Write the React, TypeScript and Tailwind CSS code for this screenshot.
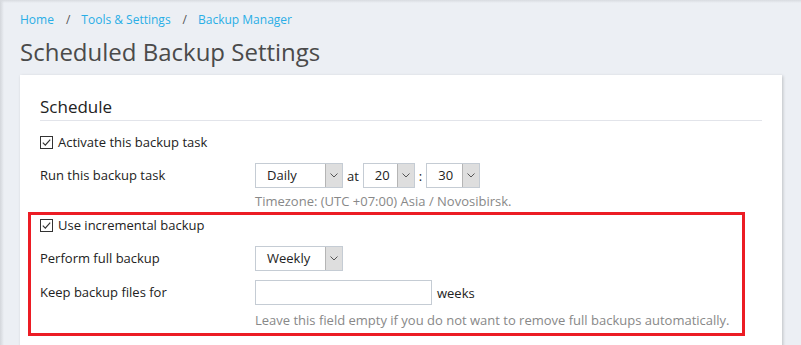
import React from "react";

function CheckBox() {
  return (
    <svg width="13" height="13" viewBox="0 0 13 13" className="flex-shrink-0">
      <rect x="0.5" y="0.5" width="12" height="12" fill="#fff" stroke="#333" />
      <path d="M2.8 6.6 L5.3 9.1 L10.2 3.6" fill="none" stroke="#333" strokeWidth="1.2" />
    </svg>
  );
}

function Select({ value, width }: { value: string; width: string }) {
  return (
    <div className={`flex h-[25px] border border-[#c5ccd4] bg-white ${width}`}>
      <span className="flex-1 pl-[11px] leading-[23px] text-[#222]">{value}</span>
      <span className="w-[17px] h-full bg-[#dedede] border-l border-[#b5b5b5] flex items-center justify-center">
        <svg width="8" height="5" viewBox="0 0 8 5">
          <path d="M0.5 0.5 L4 4 L7.5 0.5" fill="none" stroke="#555" strokeWidth="1" />
        </svg>
      </span>
    </div>
  );
}

export default function App() {
  return (
    <div
      className="relative w-[801px] h-[345px] overflow-hidden bg-[#eceff4] text-[13px] leading-[18px] text-[#222]"
      style={{ fontFamily: '"Open Sans", "Noto Sans", sans-serif' }}
    >
      {/* edge shadows */}
      <div className="absolute left-0 top-0 h-full w-[4px] bg-gradient-to-r from-[#d3d6db] to-transparent" />
      <div className="absolute left-0 top-0 w-full h-[3px] bg-gradient-to-b from-[#d8dbe0] to-transparent" />

      <div className="pl-[20px] pt-[10px]">
        {/* Breadcrumb */}
        <div className="flex items-center h-[20px] text-[12px] text-[#29aee6]">
          <span>Home</span>
          <span className="ml-[12px] mr-[11px] text-[#555]">/</span>
          <span>Tools &amp; Settings</span>
          <span className="ml-[12px] mr-[11px] text-[#555]">/</span>
          <span>Backup Manager</span>
        </div>
        <h1 className="mt-[6px] text-[24px] leading-[32px] text-[#4a4a4a]">Scheduled Backup Settings</h1>

        {/* Card */}
        <div className="mt-[7px] w-[762px] h-[300px] bg-white shadow-[1px_1px_3px_rgba(0,0,0,0.2)] px-[20px] pt-[20px]">
          <h2 className="text-[17px] leading-[24px] text-[#222] pb-[1px] border-b border-[#e2e4ea]">Schedule</h2>

          <div className="mt-[12px] flex items-center gap-[5px] h-[18px]">
            <CheckBox />
            <span>Activate this backup task</span>
          </div>

          <div className="mt-[12px] flex">
            <div className="w-[215px] leading-[25px]">Run this backup task</div>
            <div>
              <div className="flex items-center">
                <Select value="Daily" width="w-[88px]" />
                <span className="mx-[4px]">at</span>
                <Select value="20" width="w-[52px]" />
                <span className="mx-[4px]">:</span>
                <Select value="30" width="w-[54px]" />
              </div>
              <div className="mt-[4px] text-[#888]">Timezone: (UTC +07:00) Asia / Novosibirsk.</div>
            </div>
          </div>

          <div className="mt-[6px] flex items-center gap-[5px] h-[18px]">
            <CheckBox />
            <span>Use incremental backup</span>
          </div>

          <div className="mt-[12px] flex">
            <div className="w-[215px] leading-[25px]">Perform full backup</div>
            <Select value="Weekly" width="w-[88px]" />
          </div>

          <div className="mt-[9px] flex">
            <div className="w-[215px] leading-[25px]">Keep backup files for</div>
            <div>
              <div className="flex items-center">
                <div className="w-[177px] h-[25px] border border-[#c5ccd4] bg-white" />
                <span className="ml-[5px]">weeks</span>
              </div>
              <div className="mt-[6px] text-[#888]">
                Leave this field empty if you do not want to remove full backups automatically.
              </div>
            </div>
          </div>
        </div>
      </div>

      {/* annotation box */}
      <div className="absolute left-[28px] top-[212px] w-[717px] h-[124px] border-[3px] border-[#ec1c24]" />
    </div>
  );
}
